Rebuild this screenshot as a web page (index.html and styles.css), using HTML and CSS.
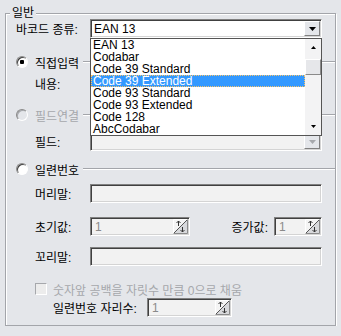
FILE: index.html
```html
<!DOCTYPE html>
<html lang="ko">
<head>
<meta charset="UTF-8">
<meta name="viewport" content="width=device-width, initial-scale=1.0">
<title>일련번호 설정</title>
<link rel="stylesheet" href="styles.css">
</head>
<body>
  <fieldset class="group">
    <legend>일반</legend>
    <div class="group-body">

      <div class="row row-type">
        <label class="label-wide">바코드 종류:</label>
        <div class="combo-wrap">
          <div class="field combo">
            <span class="combo-text">EAN 13</span>
            <span class="drop-btn"><svg width="7" height="4" viewBox="0 0 7 4"><path d="M0 0h7L3.5 4z" fill="#000"/></svg></span>
          </div>
          <!-- opened list of the combo -->
          <div class="dropdown">
            <ul class="options">
              <li>EAN 13</li>
              <li>Codabar</li>
              <li>Code 39 Standard</li>
              <li class="selected">Code 39 Extended</li>
              <li>Code 93 Standard</li>
              <li>Code 93 Extended</li>
              <li>Code 128</li>
              <li>AbcCodabar</li>
            </ul>
            <div class="scrollbar">
              <span class="sb-btn"><svg width="5" height="3" viewBox="0 0 5 3"><path d="M0 3h5L2.5 0z" fill="#000"/></svg></span>
              <span class="sb-track"><span class="sb-thumb"></span></span>
              <span class="sb-btn"><svg width="5" height="3" viewBox="0 0 5 3"><path d="M0 0h5L2.5 3z" fill="#000"/></svg></span>
            </div>
          </div>
        </div>
      </div>

      <div class="section sec-direct">
        <span class="radio checked"></span>
        <span class="section-title">직접입력</span>
        <span class="section-line"></span>
      </div>
      <div class="row row-content">
        <label class="label">내용:</label>
        <div class="field"></div>
      </div>

      <div class="section sec-link">
        <span class="radio disabled"></span>
        <span class="section-title dim">필드연결</span>
        <span class="section-line"></span>
      </div>
      <div class="row row-field">
        <label class="label">필드:</label>
        <div class="field combo disabled">
          <span class="combo-text"></span>
          <span class="drop-btn"><svg width="7" height="4" viewBox="0 0 7 4"><path d="M0 0h7L3.5 4z" fill="#a6a8ac"/></svg></span>
        </div>
      </div>

      <div class="section sec-serial">
        <span class="radio"></span>
        <span class="section-title">일련번호</span>
        <span class="section-line"></span>
      </div>
      <div class="row row-prefix">
        <label class="label">머리말:</label>
        <div class="field disabled"></div>
      </div>
      <div class="row row-start">
        <label class="label">초기값:</label>
        <div class="field-group">
          <div class="field spin spin-start">
            <span class="spin-value">1</span>
            <svg class="spin-icon" width="15" height="15" viewBox="0 0 15 15"><rect width="15" height="15" fill="#f4f4f4"/><path d="M15 0V15H0z" fill="#d8d9dc"/><path d="M0.5 14.5V0.5H14.5" stroke="#fff" fill="none"/><path d="M14.5 0.5V14.5H0.5" stroke="#8c8c8c" fill="none"/><path d="M1 14L14 1" stroke="#555"/><path d="M5.5 2v5M3.5 4l2-2 2 2" stroke="#333" fill="none"/><path d="M9.5 8v5M7.5 11l2 2 2-2" stroke="#333" fill="none"/></svg>
          </div>
          <label class="inc-label">증가값:</label>
          <div class="field spin spin-step">
            <span class="spin-value">1</span>
            <svg class="spin-icon" width="15" height="15" viewBox="0 0 15 15"><rect width="15" height="15" fill="#f4f4f4"/><path d="M15 0V15H0z" fill="#d8d9dc"/><path d="M0.5 14.5V0.5H14.5" stroke="#fff" fill="none"/><path d="M14.5 0.5V14.5H0.5" stroke="#8c8c8c" fill="none"/><path d="M1 14L14 1" stroke="#555"/><path d="M5.5 2v5M3.5 4l2-2 2 2" stroke="#333" fill="none"/><path d="M9.5 8v5M7.5 11l2 2 2-2" stroke="#333" fill="none"/></svg>
          </div>
        </div>
      </div>
      <div class="row row-suffix">
        <label class="label">꼬리말:</label>
        <div class="field disabled"></div>
      </div>

      <div class="row row-check">
        <span class="checkbox"></span>
        <span class="check-text dim">숫자앞 공백을 자릿수 만큼 0으로 채움</span>
      </div>
      <div class="row row-digits">
        <label class="digits-label">일련번호 자리수:</label>
        <div class="field spin spin-digits">
          <span class="spin-value">1</span>
          <svg class="spin-icon" width="15" height="15" viewBox="0 0 15 15"><rect width="15" height="15" fill="#f4f4f4"/><path d="M15 0V15H0z" fill="#d8d9dc"/><path d="M0.5 14.5V0.5H14.5" stroke="#fff" fill="none"/><path d="M14.5 0.5V14.5H0.5" stroke="#8c8c8c" fill="none"/><path d="M1 14L14 1" stroke="#555"/><path d="M5.5 2v5M3.5 4l2-2 2 2" stroke="#333" fill="none"/><path d="M9.5 8v5M7.5 11l2 2 2-2" stroke="#333" fill="none"/></svg>
        </div>
      </div>

    </div>
  </fieldset>
</body>
</html>
```

FILE: styles.css
```css
body {
  margin: 0;
  padding-top: 7px;
  background-color: #e4e6ea;
  font-family: "Liberation Sans", "Noto Sans CJK KR", sans-serif;
  font-size: 12px;
  color: #000;
}

/* Group box */
.group {
  margin: 0 5px 0 5px;
  padding: 0 0 8px 4px;
  border: 1px solid #a3a5aa;
  box-shadow: 1px 1px 0 #fff, inset 1px 1px 0 #fff;
  min-width: 0;
}

.group legend {
  padding: 0 2px;
  line-height: 12px;
  background-color: #e4e6ea;
}

.group-body {
  padding-left: 6px;
}

.row {
  display: flex;
  align-items: center;
  height: 19px;
}

.label-wide {
  width: 74px;
}

.label {
  width: 55px;
  margin-left: 19px;
}

.dim {
  color: #a6a8ac;
}

/* vertical rhythm */
.sec-direct { margin-top: 17px; }
.row-content { margin-top: 5px; }
.sec-link { margin-top: 15px; }
.row-field { margin-top: 10px; }
.sec-serial { margin-top: 11px; }
.row-prefix { margin-top: 8px; }
.row-start { margin-top: 14px; }
.row-suffix { margin-top: 11px; }
.row-check { margin-top: 16px; height: 14px; }
.row-digits { margin-top: 2px; }

/* Sunken fields */
.field {
  width: 232px;
  height: 19px;
  box-sizing: border-box;
  border: 1px solid;
  border-color: #808080 #fff #fff #808080;
  box-shadow: inset 1px 1px 0 #404040, inset -1px -1px 0 #d4d4d4;
  background-color: #fff;
}

.field.disabled,
.spin {
  background-color: #f2f2f2;
}

/* Combo box */
.combo-wrap {
  position: relative;
}

.combo {
  display: flex;
  align-items: center;
  padding: 1px 1px 1px 3px;
}

.combo-text {
  flex: 1;
}

.drop-btn {
  width: 16px;
  height: 15px;
  box-sizing: border-box;
  border: 1px solid;
  border-color: #fff #808080 #808080 #fff;
  background-color: #e4e6ea;
  display: flex;
  align-items: center;
  justify-content: center;
}

.dropdown {
  position: absolute;
  top: 19px;
  left: 0;
  width: 232px;
  height: 98px;
  box-sizing: border-box;
  border: 1px solid #555;
  background-color: #fff;
  display: flex;
  z-index: 2;
}

.options {
  flex: 1;
  margin: 0;
  padding: 0;
  list-style: none;
  line-height: 12px;
}

.options li {
  padding-left: 2px;
  white-space: nowrap;
}

.options li.selected {
  background-color: #3399ff;
  color: #fff;
  outline: 1px dotted #f7c46a;
  outline-offset: -1px;
}

.scrollbar {
  width: 16px;
  display: flex;
  flex-direction: column;
  background-color: #f3f3f4;
}

.sb-btn {
  height: 17px;
  display: flex;
  align-items: center;
  justify-content: center;
}

.sb-track {
  flex: 1;
}

.sb-thumb {
  display: block;
  margin-top: 3px;
  height: 16px;
  box-sizing: border-box;
  border: 1px solid;
  border-color: #fff #8a8a8a #8a8a8a #fff;
  background-color: #e6e7ea;
}

/* Radio sections */
.section {
  display: flex;
  align-items: center;
  height: 14px;
}

.radio {
  width: 12px;
  height: 12px;
  box-sizing: border-box;
  border-radius: 50%;
  border: 1px solid;
  border-color: #8a8a8a #fff #fff #8a8a8a;
  box-shadow: inset 1px 1px 0 #404040;
  background-color: #fff;
}

.radio.checked {
  background: radial-gradient(circle, #000 2px, #fff 2.5px);
}

.radio.disabled {
  background-color: #e4e6ea;
  box-shadow: inset 1px 1px 0 #a6a8ac;
}

.section-title {
  margin-left: 7px;
}

.section-line {
  flex: 1;
  margin-left: 4px;
  border-top: 1px solid #a3a5aa;
  border-bottom: 1px solid #fff;
}

/* Spin boxes */
.field-group {
  width: 232px;
  display: flex;
  align-items: center;
}

.spin {
  display: flex;
  align-items: center;
  padding: 0 1px 0 4px;
  color: #8a8a8a;
}

.spin-value {
  flex: 1;
}

.spin-start { width: 100px; }

.inc-label {
  margin-left: auto;
}

.spin-step {
  width: 48px;
  margin-left: 6px;
}

/* Check row */
.checkbox {
  width: 12px;
  height: 12px;
  margin-left: 19px;
  box-sizing: border-box;
  border: 1px solid;
  border-color: #a6a8ac #fff #fff #a6a8ac;
  background-color: #ececec;
}

.check-text {
  margin-left: 6px;
}

.digits-label {
  width: 94px;
  margin-left: 37px;
}

.spin-digits {
  width: 85px;
}
```
